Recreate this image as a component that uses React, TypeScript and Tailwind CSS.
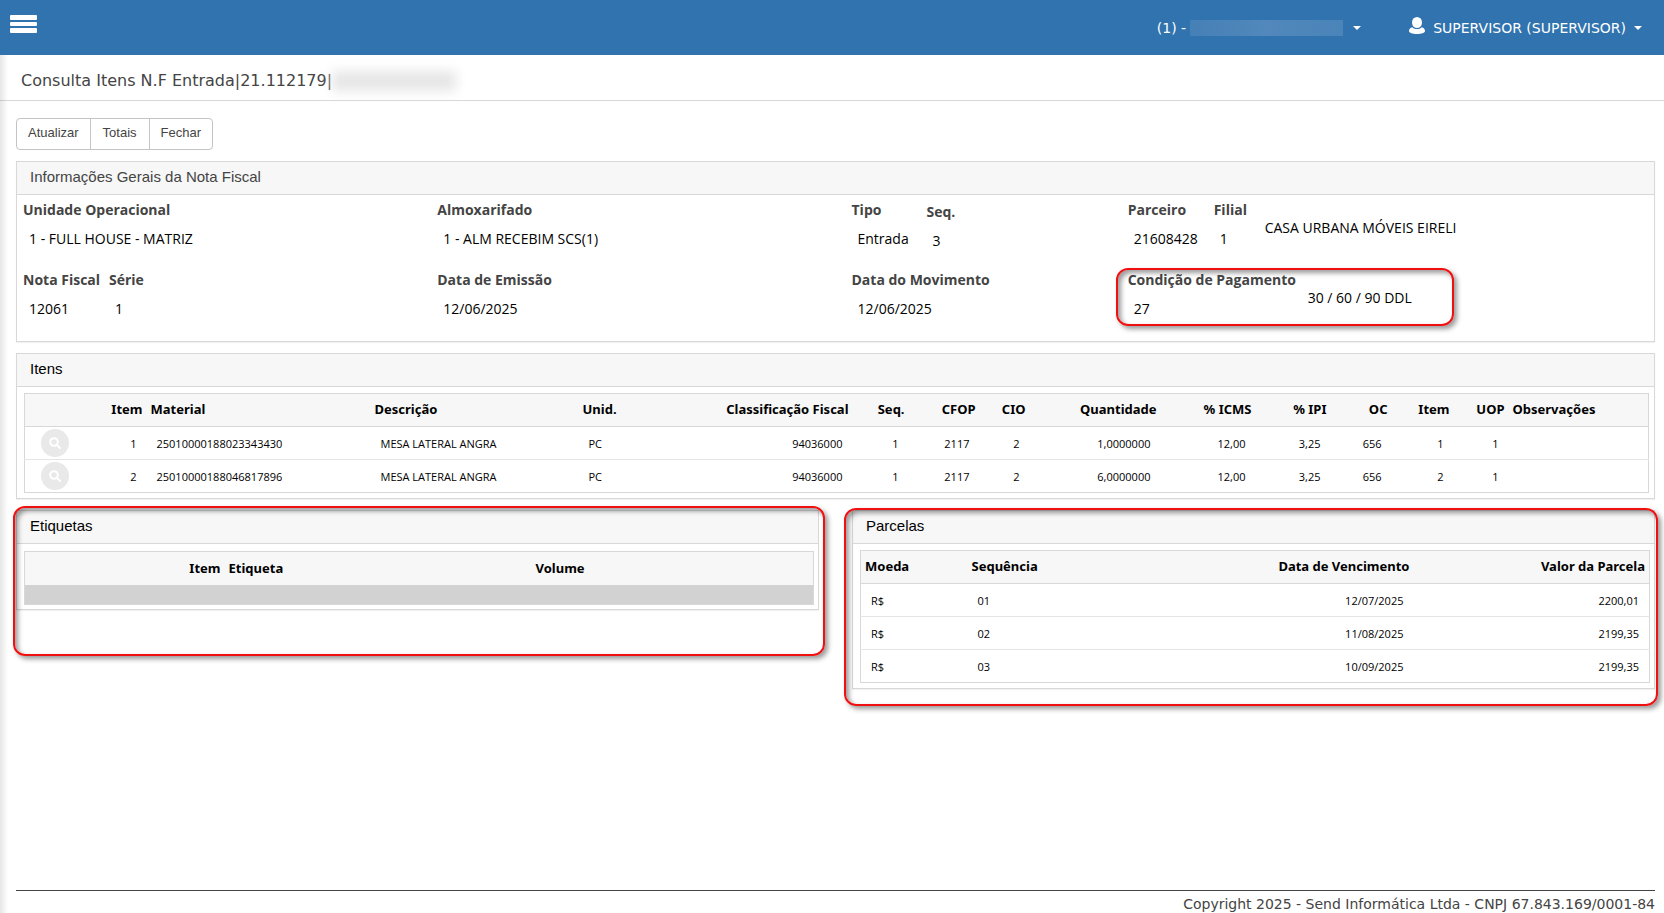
import type { ReactNode } from "react";
import clsx from "clsx";

const itens = [
  {
    item: 1,
    material: "25010000188023343430",
    descricao: "MESA LATERAL ANGRA",
    unidade: "PC",
    classificacao: "94036000",
    seq: 1,
    cfop: "2117",
    cio: 2,
    quantidade: "1,0000000",
    icms: "12,00",
    ipi: "3,25",
    oc: "656",
    itemOc: 1,
    uop: 1,
  },
  {
    item: 2,
    material: "25010000188046817896",
    descricao: "MESA LATERAL ANGRA",
    unidade: "PC",
    classificacao: "94036000",
    seq: 1,
    cfop: "2117",
    cio: 2,
    quantidade: "6,0000000",
    icms: "12,00",
    ipi: "3,25",
    oc: "656",
    itemOc: 2,
    uop: 1,
  },
];

const parcelas = [
  { moeda: "R$", sequencia: "01", vencimento: "12/07/2025", valor: "2200,01" },
  { moeda: "R$", sequencia: "02", vencimento: "11/08/2025", valor: "2199,35" },
  { moeda: "R$", sequencia: "03", vencimento: "10/09/2025", valor: "2199,35" },
];

function Caret() {
  return (
    <svg className="w-2 h-1" viewBox="0 0 8 4" fill="currentColor" aria-hidden="true">
      <path d="M0 0h8L4 4z" />
    </svg>
  );
}

function Panel({ title, muted, children }: { title: string; muted?: boolean; children: ReactNode }) {
  return (
    <section className="border border-[#d8d8d8] bg-white shadow-[0_1px_1px_rgba(0,0,0,0.05)]">
      <h2
        className={clsx(
          "h-[33px] px-[13px] pb-[2px] flex items-center bg-[#f7f7f7] border-b border-[#d8d8d8] text-[15px]",
          muted ? "text-[#444]" : "text-black"
        )}
      >
        {title}
      </h2>
      {children}
    </section>
  );
}

function Field({ label, value, className }: { label: string; value: string; className?: string }) {
  return (
    <div className={className}>
      <dt className="font-bold text-[#444]">{label}</dt>
      <dd className="mt-[9px] pl-[6px] text-black">{value}</dd>
    </div>
  );
}

// Red frame drawn over a highlighted area
function Highlight({ className }: { className: string }) {
  return (
    <div
      className={clsx(
        "absolute pointer-events-none border-2 border-[#f01010] rounded-xl shadow-[3px_3px_5px_rgba(0,0,0,0.4),inset_3px_3px_5px_rgba(0,0,0,0.4)]",
        className
      )}
    />
  );
}

function Th({ right, children }: { right?: boolean; children?: ReactNode }) {
  return (
    <th className={clsx("h-[33px] px-1 font-bold whitespace-nowrap", right ? "text-right" : "text-left")}>
      {children}
    </th>
  );
}

function Td({ right, children }: { right?: boolean; children?: ReactNode }) {
  return (
    <td className={clsx("h-[33px] px-[10px] pt-[2px] whitespace-nowrap", right ? "text-right" : "text-left")}>
      {children}
    </td>
  );
}

export default function App() {
  return (
    <div className="relative min-h-screen flex flex-col bg-white font-['Liberation_Sans',sans-serif] text-[#444]">
      <header className="h-[55px] shrink-0 flex items-center justify-between bg-[#3073ae] text-white text-sm font-['DejaVu_Sans',sans-serif]">
        <button type="button" aria-label="Menu" className="ml-[10px] mb-2">
          <svg className="w-[27px] h-[18px]" viewBox="0 0 27 18" fill="currentColor" aria-hidden="true">
            <rect width="27" height="5" rx="1" />
            <rect y="7" width="27" height="4" rx="1" />
            <rect y="13" width="27" height="5" rx="1" />
          </svg>
        </button>
        <nav className="flex items-center pr-[22px]">
          <button type="button" className="flex items-center mr-12">
            (1) -
            <span className="w-[153px] h-4 ml-1 mr-[10px] bg-linear-to-r from-[#4580b6] via-[#5288bb] to-[#4a84b8]" />
            <Caret />
          </button>
          <button type="button" className="flex items-center">
            <svg className="w-4 h-[17px] mr-2 mb-1" viewBox="0 0 16 17" fill="currentColor" aria-hidden="true">
              <ellipse cx="8" cy="5.5" rx="5" ry="5.5" />
              <path d="M3.2 10.2C1.200 10.800 0 12.200 0 14c0 2 3.500 3 8 3s8-1 8-3c0-1.800-1.200-3.200-3.200-3.800C11.600 11.600 10 12 8 12s-3.600-.4-4.800-1.800z" />
            </svg>
            <span className="mr-2">SUPERVISOR (SUPERVISOR)</span>
            <Caret />
          </button>
        </nav>
      </header>

      {/* Left edge shade */}
      <div className="absolute left-0 top-[55px] bottom-0 w-2 bg-linear-to-r from-black/10 to-transparent" />

      <div className="h-[46px] shrink-0 flex items-center pl-[21px] pt-[6px] border-b border-[#d8d8d8]">
        <h1 className="text-base font-['DejaVu_Sans',sans-serif]">Consulta Itens N.F Entrada|21.112179|</h1>
        <span className="w-[124px] h-5 bg-[#e6e6e6] blur-[6px]" />
      </div>

      <main className="flex-1 px-4 pr-[9px] pt-[17px]">
        <div className="flex w-fit h-8 border border-[#c4c4c4] rounded divide-x divide-[#c4c4c4] text-[13px]">
          <button type="button" className="px-[11px] pb-[2px]">Atualizar</button>
          <button type="button" className="px-3 pb-[2px]">Totais</button>
          <button type="button" className="px-[11px] pb-[2px]">Fechar</button>
        </div>

        <div className="mt-[11px]">
          <Panel title="Informações Gerais da Nota Fiscal" muted>
            <div className="grid grid-cols-[414fr_414fr_276fr_526fr] gap-y-[19px] pl-[6px] pt-[5px] pb-[22px] text-sm leading-5 font-['Open_Sans',sans-serif]">
              <dl>
                <Field label="Unidade Operacional" value="1 - FULL HOUSE - MATRIZ" />
              </dl>
              <dl>
                <Field label="Almoxarifado" value="1 - ALM RECEBIM SCS(1)" />
              </dl>
              <dl className="flex">
                <Field label="Tipo" value="Entrada" className="w-[75px]" />
                <Field label="Seq." value="3" className="pt-[2px]" />
              </dl>
              <div className="flex">
                <dl className="flex">
                  <Field label="Parceiro" value="21608428" className="w-[86px]" />
                  <Field label="Filial" value="1" className="w-[51px]" />
                </dl>
                <span className="pt-[18px] text-black">CASA URBANA MÓVEIS EIRELI</span>
              </div>
              <dl className="flex">
                <Field label="Nota Fiscal" value="12061" className="w-[86px]" />
                <Field label="Série" value="1" />
              </dl>
              <dl>
                <Field label="Data de Emissão" value="12/06/2025" />
              </dl>
              <dl>
                <Field label="Data do Movimento" value="12/06/2025" />
              </dl>
              <div className="relative flex">
                <dl>
                  <Field label="Condição de Pagamento" value="27" className="w-[180px]" />
                </dl>
                <span className="pt-[18px] text-black">30 / 60 / 90 DDL</span>
                <Highlight className="-left-3 -top-[2px] w-[338px] h-[58px]" />
              </div>
            </div>
          </Panel>
        </div>

        <div className="mt-[11px]">
          <Panel title="Itens">
            <div className="px-[7px] pr-[5px] pt-[6px] pb-[5px]">
              <table className="w-full table-fixed border border-[#d8d8d8] text-black font-['Noto_Sans',sans-serif]">
                <colgroup>
                  <col className="w-[62px]" />
                  <col className="w-[60px]" />
                  <col className="w-[224px]" />
                  <col className="w-[208px]" />
                  <col className="w-[100px]" />
                  <col className="w-[174px]" />
                  <col className="w-[56px]" />
                  <col className="w-[71px]" />
                  <col className="w-[50px]" />
                  <col className="w-[131px]" />
                  <col className="w-[95px]" />
                  <col className="w-[75px]" />
                  <col className="w-[61px]" />
                  <col className="w-[62px]" />
                  <col className="w-[55px]" />
                  <col />
                </colgroup>
                <thead className="bg-[#f7f7f7] border-b border-[#d8d8d8] text-[13px]">
                  <tr>
                    <Th />
                    <Th right>Item</Th>
                    <Th>Material</Th>
                    <Th>Descrição</Th>
                    <Th>Unid.</Th>
                    <Th right>Classificação Fiscal</Th>
                    <Th right>Seq.</Th>
                    <Th right>CFOP</Th>
                    <Th right>CIO</Th>
                    <Th right>Quantidade</Th>
                    <Th right>% ICMS</Th>
                    <Th right>% IPI</Th>
                    <Th right>OC</Th>
                    <Th right>Item</Th>
                    <Th right>UOP</Th>
                    <Th>Observações</Th>
                  </tr>
                </thead>
                <tbody className="divide-y divide-[#e5e5e5] text-[11px] font-['Open_Sans',sans-serif]">
                  {itens.map((row) => (
                    <tr key={row.item}>
                      <td className="pl-4">
                        <button
                          type="button"
                          aria-label={`Consultar item ${row.item}`}
                          className="flex items-center justify-center w-7 h-7 rounded-full bg-[#e9e9e9] text-white"
                        >
                          <svg className="w-3 h-3" viewBox="0 0 12 12" fill="none" stroke="currentColor" strokeWidth="2" aria-hidden="true">
                            <circle cx="5" cy="5" r="3.800" />
                            <path d="M7.700 7.700L11 11" strokeLinecap="round" />
                          </svg>
                        </button>
                      </td>
                      <Td right>{row.item}</Td>
                      <Td>{row.material}</Td>
                      <Td>{row.descricao}</Td>
                      <Td>{row.unidade}</Td>
                      <Td right>{row.classificacao}</Td>
                      <Td right>{row.seq}</Td>
                      <Td right>{row.cfop}</Td>
                      <Td right>{row.cio}</Td>
                      <Td right>{row.quantidade}</Td>
                      <Td right>{row.icms}</Td>
                      <Td right>{row.ipi}</Td>
                      <Td right>{row.oc}</Td>
                      <Td right>{row.itemOc}</Td>
                      <Td right>{row.uop}</Td>
                      <Td />
                    </tr>
                  ))}
                </tbody>
              </table>
            </div>
          </Panel>
        </div>

        <div className="mt-[11px] grid grid-cols-2 items-start gap-x-[33px]">
          <div className="relative">
            <Panel title="Etiquetas">
              <div className="px-[7px] pr-1 pt-[7px] pb-1">
                <table className="w-full table-fixed border border-[#d8d8d8] text-black text-[13px] font-['Noto_Sans',sans-serif]">
                  <colgroup>
                    <col className="w-[200px]" />
                    <col className="w-[307px]" />
                    <col />
                  </colgroup>
                  <thead className="bg-[#f7f7f7]">
                    <tr>
                      <Th right>Item</Th>
                      <Th>Etiqueta</Th>
                      <Th>Volume</Th>
                    </tr>
                  </thead>
                  <tbody>
                    <tr>
                      <td colSpan={3} className="h-5 bg-[#d2d2d2]" />
                    </tr>
                  </tbody>
                </table>
              </div>
            </Panel>
            <Highlight className="-left-[3px] -right-[6px] -top-1 h-[150px]" />
          </div>

          <div className="relative">
            <Panel title="Parcelas">
              <div className="px-[7px] pr-1 pt-[6px] pb-[5px]">
                <table className="w-full table-fixed border border-[#d8d8d8] text-black font-['Noto_Sans',sans-serif]">
                  <colgroup>
                    <col className="w-[107px]" />
                    <col className="w-[213px]" />
                    <col />
                    <col className="w-[236px]" />
                  </colgroup>
                  <thead className="bg-[#f7f7f7] border-b border-[#d8d8d8] text-[13px]">
                    <tr>
                      <Th>Moeda</Th>
                      <Th>Sequência</Th>
                      <Th right>Data de Vencimento</Th>
                      <Th right>Valor da Parcela</Th>
                    </tr>
                  </thead>
                  <tbody className="divide-y divide-[#e5e5e5] text-[11px] font-['Open_Sans',sans-serif]">
                    {parcelas.map((row) => (
                      <tr key={row.sequencia}>
                        <Td>{row.moeda}</Td>
                        <Td>{row.sequencia}</Td>
                        <Td right>{row.vencimento}</Td>
                        <Td right>{row.valor}</Td>
                      </tr>
                    ))}
                  </tbody>
                </table>
              </div>
            </Panel>
            <Highlight className="-left-2 -right-[3px] -top-[2px] h-[198px]" />
          </div>
        </div>
      </main>

      <footer className="ml-4 mr-[9px] h-[23px] pt-[3px] border-t border-[#444] text-right text-sm leading-5 font-['DejaVu_Sans',sans-serif]">
        Copyright 2025 - Send Informática Ltda - CNPJ 67.843.169/0001-84
      </footer>
    </div>
  );
}
